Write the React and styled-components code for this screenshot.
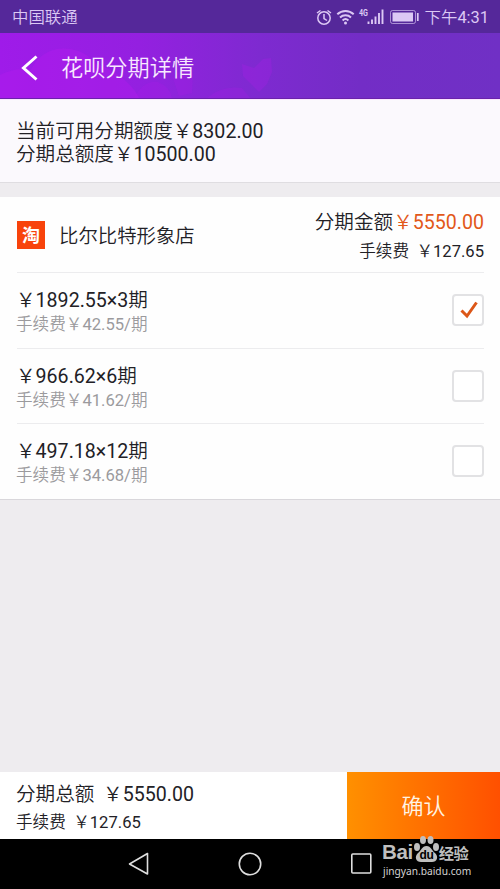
import React, { useState } from 'react';
import styled, { createGlobalStyle } from 'styled-components';

const GlobalStyle = createGlobalStyle`
  body {
    margin: 0;
    font-family: Roboto, 'Noto Sans CJK SC', sans-serif;
    color: #222126;
    background: #eeecef;
  }
`;

const Screen = styled.div`
  display: flex;
  flex-direction: column;
  width: 500px;
  height: 889px;
  overflow: hidden;
  background: #eeecef;
`;

const StatusBar = styled.div`
  display: flex;
  align-items: center;
  box-sizing: border-box;
  height: 33px;
  padding: 2px 11px 0 12px;
  background: #55289a;
  color: #dcc8f4;
  font-size: 16.4px;
  font-weight: 400;
  line-height: 30px;
`;

const Carrier = styled.span`
  flex: 1;
  font-weight: 350;
`;

const StatusIcons = styled.svg`
  width: 104px;
  height: 20px;
  margin-right: 5px;
`;

const Header = styled.header`
  position: relative;
  display: flex;
  align-items: center;
  box-sizing: border-box;
  height: 66px;
  padding: 4px 20px 0;
  border-bottom: 1px solid #6a22ab;
  background: linear-gradient(90deg, #9f1be9 0%, #9420e0 28%, #7e2ad0 52%, #732dc6 72%, #7030c5 100%);
`;

const Clouds = styled.svg`
  position: absolute;
  top: 0;
  left: 0;
  width: 500px;
  height: 65px;
`;

const BackIcon = styled.svg`
  position: relative;
  width: 20px;
  height: 28px;
`;

const Title = styled.h1`
  position: relative;
  margin: 0 0 0 21px;
  color: #f8e9ff;
  font-size: 22.2px;
  font-weight: 350;
  line-height: 32px;
`;

const Credit = styled.section`
  box-sizing: border-box;
  height: 84px;
  padding: 20px 16px 0;
  border-top: 1px solid #fbe6ff;
  border-bottom: 1px solid #dfdde1;
  background: #fbf9fd;
`;

const Line = styled.div`
  font-size: ${(props) => (props.$small ? '16.6px' : '19.6px')};
  line-height: ${(props) => props.$height || 23}px;
  color: ${(props) => props.$color || '#222126'};
  white-space: pre;
`;

const Han = styled.span`
  font-family: 'Noto Sans CJK SC', sans-serif;
  font-weight: 350;
  line-height: 1;
`;

const Price = styled.span`
  color: #e2581a;
`;

const Card = styled.section`
  box-sizing: border-box;
  height: 303px;
  margin-top: 14px;
  padding: 0 16px;
  border-bottom: 1px solid #d9d7db;
  background: #fefefe;
`;

const Shop = styled.div`
  display: flex;
  align-items: center;
  height: 75px;
`;

const ShopLogo = styled.div`
  width: 28px;
  height: 28px;
  margin: 0 14px 0 1px;
  background: #f8430b;
  color: #fff;
  font: 700 18px/26px 'Noto Sans CJK SC', sans-serif;
  text-align: center;
`;

const ShopName = styled.div`
  flex: 1;
  padding-top: 4px;
  font-size: 19.4px;
  line-height: 28px;
`;

const Amounts = styled.div`
  padding-top: 4px;
  text-align: right;
`;

const Option = styled.div`
  display: flex;
  align-items: center;
  justify-content: space-between;
  box-sizing: border-box;
  height: 75.5px;
  margin-left: 1px;
  border-top: 1px solid #ececee;
`;

const Plan = styled.div`
  margin-left: -1px;
  padding-top: 5px;
`;

const Checkbox = styled.button`
  box-sizing: border-box;
  width: 32px;
  height: 32px;
  padding: 0;
  border: 2px solid #e2e2e4;
  border-radius: 4px;
  background: #fff;
`;

const Spacer = styled.div`
  flex: 1;
`;

const Footer = styled.footer`
  display: flex;
  height: 67px;
  background: #fff;
`;

const Totals = styled.div`
  flex: 1;
  padding: 8px 0 0 16px;
`;

const Confirm = styled.button`
  width: 153px;
  padding: 0 0 4px;
  border: 0;
  background: linear-gradient(90deg, #ff9000, #ff5000);
  color: #fff4e4;
  font: 350 22px 'Noto Sans CJK SC', sans-serif;
`;

const NavBar = styled.nav`
  position: relative;
  height: 50px;
  background: #000;
`;

const NavIcons = styled.svg`
  display: block;
  width: 500px;
  height: 50px;
`;

/* sits over the confirm button and the nav bar */
const Watermark = styled.div`
  position: absolute;
  top: -3px;
  left: 382px;
  width: 94px;
  color: #bfbfbf;
`;

const Brand = styled.div`
  display: flex;
  height: 28px;
  align-items: flex-end;
  font: 700 20.5px/19px 'Liberation Sans', sans-serif;
  letter-spacing: -0.4px;
`;

const BrandHan = styled.span`
  font: 700 15.3px/24px 'Noto Sans CJK SC', sans-serif;
`;

const BrandLatin = styled.span`
  padding-bottom: 3px;
`;

const Site = styled.div`
  margin-left: 1px;
  font: 400 10.2px/15px 'Noto Sans', sans-serif;
  color: #d4d4d4;
`;

const Paw = styled.svg`
  width: 26px;
  height: 28px;
  margin-top: -1px;
  align-self: flex-start;
`;

const plans = [
  { price: '1892.55', months: 3, fee: '42.55' },
  { price: '966.62', months: 6, fee: '41.62' },
  { price: '497.18', months: 12, fee: '34.68' },
];

const PhoneStatus = () => (
  <StatusIcons viewBox="0 0 104 20" fill="none" stroke="#dcc8f4">
    <circle cx="8" cy="10" r="6.2" strokeWidth="1.5" />
    <path d="M8 6V10.5l3 2M1 5L4.5 2.5M15 5L11.5 2.5" strokeWidth="1.5" />
    <path d="M21.3 6.2a12 12 0 0 1 16.4 0M24 9.4a8 8 0 0 1 11 0M26.6 12.4a4.3 4.3 0 0 1 5.8 0" strokeWidth="2" />
    <circle cx="29.5" cy="15" r="1.5" fill="#dcc8f4" stroke="none" />
    <text x="43" y="8" fontSize="9" fontWeight="700" fontFamily="Roboto" fill="#dcc8f4" stroke="none" textLength="9" lengthAdjust="spacingAndGlyphs">4G</text>
    <path d="M52.5 16v-2.5M56 16v-4.5M59.5 16v-7.5M63 16V5M66.5 16V1.5" strokeWidth="1.9" />
    <rect x="74.5" y="2.5" width="25" height="13" rx="2" strokeWidth="1" opacity=".65" />
    <rect x="76.5" y="4.5" width="20.5" height="9" fill="#dcc8f4" stroke="none" />
    <path d="M101.8 5v8" strokeWidth="1.7" />
  </StatusIcons>
);

const HeaderClouds = () => (
  <Clouds viewBox="0 0 500 65" fill="#b51bed">
    <path d="M0 65V42Q15 34 31 37Q39 20 57 16Q81 13 96 31Q119 38 135 58L139 65Z" opacity=".4" />
    <path d="M134 65Q144 47 158 49Q170 54 172 65ZM173 45Q183 32 193 40L192 60L179 63ZM207 65Q222 52 242 55L250 65Z" opacity=".2" />
    <path d="M242 31L254 35L263 26L271 25L272 39L267 51L259 59L250 50L243 43Z" opacity=".25" />
  </Clouds>
);

const App = () => {
  const [selected, setSelected] = useState(0);

  return (
    <>
      <GlobalStyle />
      <Screen>
        <StatusBar>
          <Carrier>中国联通</Carrier>
          <PhoneStatus />
          <span><Han>下午</Han>4:31</span>
        </StatusBar>
        <Header>
          <HeaderClouds />
          <BackIcon viewBox="0 0 20 28" fill="none" stroke="#fff" strokeWidth="3">
            <path d="M16.5 2.5L3.5 14l13 11.5" />
          </BackIcon>
          <Title>花呗分期详情</Title>
        </Header>
        <Credit>
          <Line><Han>当前可用分期额度￥</Han>8302.00</Line>
          <Line><Han>分期总额度￥</Han>10500.00</Line>
        </Credit>
        <Card>
          <Shop>
            <ShopLogo>淘</ShopLogo>
            <ShopName><Han>比尔比特形象店</Han></ShopName>
            <Amounts>
              <Line $height={30}><Han>分期金额</Han><Price><Han>￥</Han>5550.00</Price></Line>
              <Line $small $height={27}><Han>手续费  ￥</Han>127.65</Line>
            </Amounts>
          </Shop>
          {plans.map((plan, index) => (
            <Option key={plan.months}>
              <Plan>
                <Line $height={25}><Han>￥</Han>{plan.price}×{plan.months}<Han>期</Han></Line>
                <Line $small $height={24} $color="#9b9a9d"><Han>手续费￥</Han>{plan.fee}/<Han>期</Han></Line>
              </Plan>
              <Checkbox onClick={() => setSelected(index)}>
                {selected === index && (
                  <svg width="28" height="28" viewBox="0 0 28 28" fill="none" stroke="#dc5718" strokeWidth="3">
                    <path d="M7.5 14.5l5.5 5.5L22.5 6.5" />
                  </svg>
                )}
              </Checkbox>
            </Option>
          ))}
        </Card>
        <Spacer />
        <Footer>
          <Totals>
            <Line $height={29}><Han>分期总额  ￥</Han>5550.00</Line>
            <Line $small $height={27}><Han>手续费  ￥</Han>127.65</Line>
          </Totals>
          <Confirm>确认</Confirm>
        </Footer>
        <NavBar>
          <NavIcons viewBox="0 0 500 50" fill="none" stroke="#dedede" strokeWidth="1.6" strokeLinejoin="round">
            <path d="M129.5 25L147.5 14.5v20.5Z" />
            <circle cx="250" cy="25" r="10.7" />
            <rect x="351.8" y="15" width="19" height="19" rx="1" />
          </NavIcons>
          <Watermark>
            <Brand>
              <BrandLatin>Bai</BrandLatin>
              <Paw viewBox="0 0 26 28" fill="#bfbfbf">
                <ellipse cx="4" cy="12" rx="3" ry="4" />
                <ellipse cx="10" cy="5" rx="3" ry="4" />
                <ellipse cx="17.5" cy="5" rx="3" ry="4" />
                <ellipse cx="23" cy="12" rx="3" ry="4" />
                <path d="M13.5 11C9 11 8 16 5 18c-4 4-2 9 3 9h11c5 0 7-5 3-9-3-2-4-7-8.5-7Z" />
                <text x="6.5" y="24" fontSize="12" fontWeight="700" fontFamily="Liberation Sans" fill="#000">du</text>
              </Paw>
              <BrandHan>经验</BrandHan>
            </Brand>
            <Site>jingyan.baidu.com</Site>
          </Watermark>
        </NavBar>
      </Screen>
    </>
  );
};

export default App;
